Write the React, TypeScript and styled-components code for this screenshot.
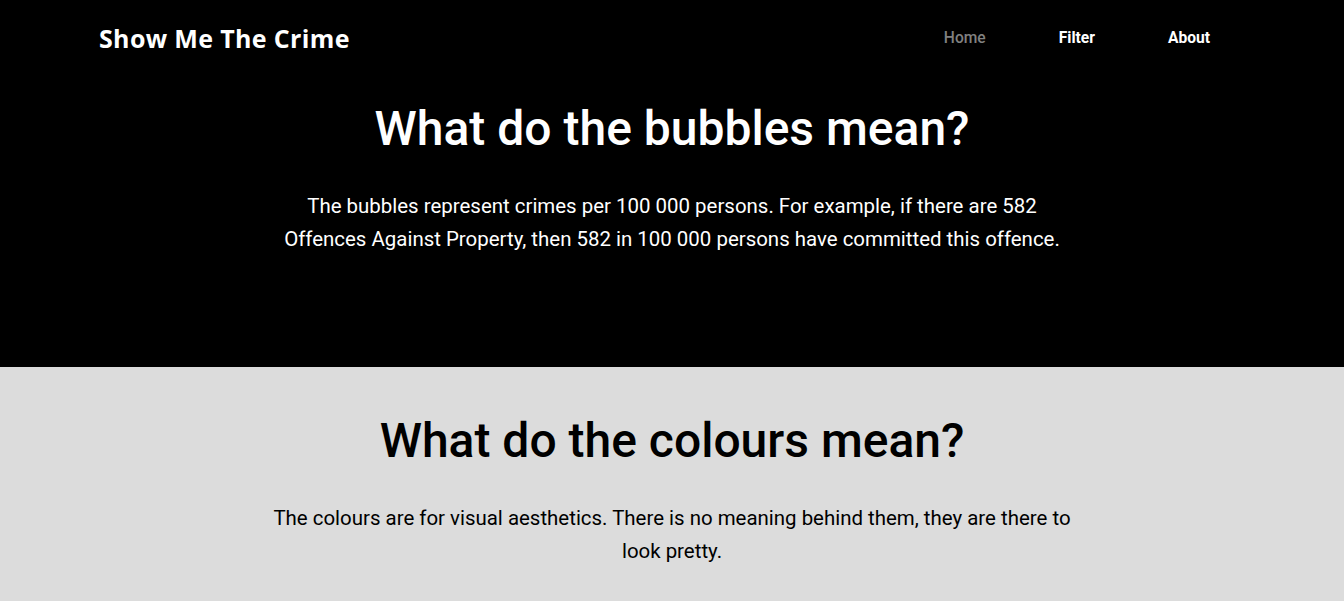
import React from "react";
import styled, { createGlobalStyle } from "styled-components";

const Global = createGlobalStyle`
  html, body { margin: 0; padding: 0; }
  body { font-family: Roboto, "Liberation Sans", sans-serif; background: #dcdcdc; }
`;

const Hero = styled.section`
  background: #000;
  color: #fff;
  height: 367px;
  display: flex;
  flex-direction: column;
`;

const Nav = styled.nav`
  display: flex;
  align-items: center;
  justify-content: space-between;
  height: 75px;
  padding: 0 134px 0 99px;
`;

const Logo = styled.div`
  font-family: "Open Sans", "DejaVu Sans", sans-serif;
  font-weight: 700;
  font-size: 25px;
  letter-spacing: 0.35px;
  color: #fff;
`;

const Links = styled.div`
  display: flex;
  gap: 73px;
`;

const Link = styled.a<{ $active?: boolean }>`
  font-family: Roboto, sans-serif;
  font-weight: ${p => (p.$active ? 500 : 700)};
  font-size: 15.6px;
  color: ${p => (p.$active ? "#808080" : "#fff")};
  text-decoration: none;
`;

const Section = styled.div<{ $dark?: boolean }>`
  display: flex;
  flex-direction: column;
  align-items: center;
  text-align: center;
  color: ${p => (p.$dark ? "#fff" : "#000")};
`;

const Title = styled.h1`
  margin: 25px 0 0;
  font-size: 48px;
  font-weight: 500;
  line-height: 58px;
`;

const Para = styled.p`
  margin: 32px 0 0;
  max-width: 800px;
  font-size: 20.45px;
  line-height: 32.5px;
`;

const Light = styled.section`
  background: #dcdcdc;
  padding-top: 20px;
  height: 234px;
  box-sizing: border-box;
`;

export default function App() {
  return (
    <>
      <Global />
      <Hero>
        <Nav>
          <Logo>Show Me The Crime</Logo>
          <Links>
            <Link $active href="#">Home</Link>
            <Link href="#">Filter</Link>
            <Link href="#">About</Link>
          </Links>
        </Nav>
        <Section $dark>
          <Title>What do the bubbles mean?</Title>
          <Para>
            The bubbles represent crimes per 100 000 persons. For example, if there are 582 Offences Against Property, then 582 in 100 000 persons have committed this offence.
          </Para>
        </Section>
      </Hero>
      <Light>
        <Section>
          <Title as="h2">What do the colours mean?</Title>
          <Para>
            The colours are for visual aesthetics. There is no meaning behind them, they are there to look pretty.
          </Para>
        </Section>
      </Light>
    </>
  );
}
